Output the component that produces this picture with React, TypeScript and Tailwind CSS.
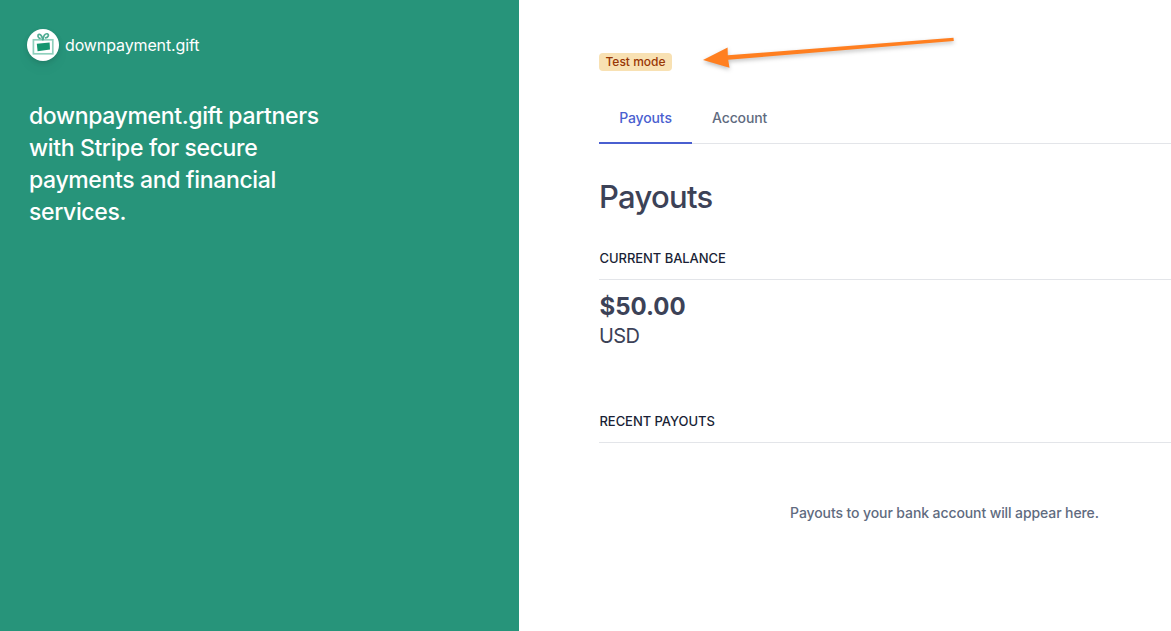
import React from "react";

function GiftLogo() {
  return (
    <svg width="32" height="32" viewBox="0 0 32 32" fill="none" aria-hidden="true">
      <rect x="6.4" y="10.8" width="19.4" height="14" stroke="#8fd0bd" strokeWidth="1.7" />
      <path d="M9.8 14.8 22.6 13.6 23 20.4 10.6 22.2Z" fill="#15966f" />
      <path d="M15.6 10.6C15.2 7.6 13.8 5 12 5.4 10.2 6 10.8 8.8 13 9.4M16 10.6C16.2 7.2 18 4.4 20.2 4.8 22.4 5.4 21.4 8.4 18.6 8.8" stroke="#4fac93" strokeWidth="1.7" strokeLinecap="round" />
    </svg>
  );
}

function Sidebar() {
  return (
    <aside className="h-full w-[519px] shrink-0 bg-[#27947a] pl-[27px] pt-[29px] text-white">
      <div className="flex items-center gap-[6px]">
        <div className="size-8 rounded-full bg-white shadow-[0_2px_5px_rgba(0,0,0,0.12),0_7px_14px_rgba(0,0,0,0.04)]">
          <GiftLogo />
        </div>
        <span className="text-base tracking-[-0.12px]">downpayment.gift</span>
      </div>
      <p className="ml-[2px] mt-[39px] whitespace-nowrap text-[23px] leading-8 font-medium tracking-[-0.36px]">
        downpayment.gift partners
        <br />
        with Stripe for secure
        <br />
        payments and financial
        <br />
        services.
      </p>
    </aside>
  );
}

function Arrow() {
  return (
    <svg className="ml-[28px] overflow-visible drop-shadow-[0_2px_2px_rgba(0,0,0,0.25)]" width="256" height="36" viewBox="0 0 256 36" aria-hidden="true">
      <path d="M3 25 27.6 12.6 27.8 20.3 253.5 2.7 253.8 6 28.2 24.7 29.5 32.7Z" fill="#ff7f20" />
    </svg>
  );
}

function SectionTitle({ children }: { children: string }) {
  return (
    <h2 className="h-[32px] border-b border-[#e3e5e9] pl-[0.5px] text-[13px] leading-5 font-medium tracking-[-0.06px] text-[#1a1f36]">
      {children}
    </h2>
  );
}

export default function App() {
  return (
    <div className="flex h-[631px] w-[1171px] overflow-hidden bg-white font-['Inter',sans-serif]">
      <Sidebar />
      <main className="min-w-0 flex-1 overflow-hidden pl-20">
        <div className="w-[691px]">
          <div className="flex h-[94px] items-start pt-[35px]">
            <span className="mt-[18px] flex h-[18px] w-[73px] items-center justify-center whitespace-nowrap rounded bg-[#f8e1b3] text-xs font-medium text-[#983705]">
              Test mode
            </span>
            <Arrow />
          </div>
          <nav className="flex h-[50px] border-b border-[#e3e5e9] text-sm font-medium tracking-[-0.12px]">
            <a className="h-[50px] w-[93px] border-b-2 border-[#4a5fd0] pt-[14px] text-center text-[#4a5fd0]">Payouts</a>
            <a className="ml-5 pt-[14px] text-[#5f6b80]">Account</a>
          </nav>
          <h1 className="mt-[33px] text-[31px] leading-10 font-medium tracking-[-0.7px] text-[#3c4257]">Payouts</h1>
          <section className="mt-[31px]">
            <SectionTitle>CURRENT BALANCE</SectionTitle>
            <p className="mt-[11px] pl-[0.5px] text-2xl leading-8 font-bold text-[#3c4257]">$50.00</p>
            <p className="-mt-px text-xl leading-7 tracking-[-0.6px] text-[#3c4257]">USD</p>
          </section>
          <section className="mt-[61px]">
            <SectionTitle>RECENT PAYOUTS</SectionTitle>
            <p className="mt-[60px] text-center text-sm font-medium tracking-[-0.1px] text-[#5f6b80]">
              Payouts to your bank account will appear here.
            </p>
          </section>
        </div>
      </main>
    </div>
  );
}
